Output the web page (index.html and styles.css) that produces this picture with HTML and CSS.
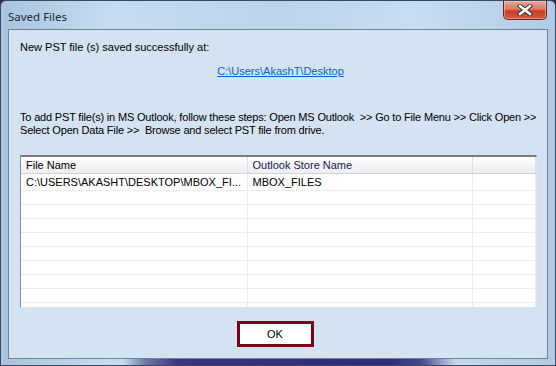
FILE: index.html
```html
<!DOCTYPE html>
<html lang="en">
<head>
    <meta charset="UTF-8">
    <title>Saved Files</title>
    <link rel="stylesheet" href="styles.css">
</head>
<body>

    <div class="window">

        <!-- Title bar -->
        <div class="titlebar">
            <span class="title">Saved Files</span>
            <button class="close" title="Close">
                <svg width="16" height="12" viewBox="0 0 16 12">
                    <path d="M3 2 L13 10 M13 2 L3 10" stroke="#3a3a3a" stroke-width="4.5" stroke-linecap="square"/>
                    <path d="M3 2 L13 10 M13 2 L3 10" stroke="#ffffff" stroke-width="2.4" stroke-linecap="square"/>
                </svg>
            </button>
        </div>

        <!-- Dialog content -->
        <div class="client">
            <p class="msg">New PST file (s) saved successfully at:</p>
            <div class="path-row"><a class="path" href="#">C:\Users\AkashT\Desktop</a></div>
            <p class="steps">To add PST file(s) in MS Outlook, follow these steps: Open MS Outlook &nbsp;&gt;&gt; Go to File Menu &gt;&gt; Click Open &gt;&gt;<br>Select Open Data File &gt;&gt; &nbsp;Browse and select PST file from drive.</p>

            <div class="grid">
                <table>
                    <colgroup>
                        <col class="c1">
                        <col class="c2">
                        <col>
                    </colgroup>
                    <thead>
                        <tr>
                            <th>File Name</th>
                            <th class="store">Outlook Store Name</th>
                            <th></th>
                        </tr>
                    </thead>
                    <tbody>
                        <tr class="first">
                            <td>C:\USERS\AKASHT\DESKTOP\MBOX_FI...</td>
                            <td>MBOX_FILES</td>
                            <td></td>
                        </tr>
                        <tr><td></td><td></td><td></td></tr>
                        <tr><td></td><td></td><td></td></tr>
                        <tr><td></td><td></td><td></td></tr>
                        <tr><td></td><td></td><td></td></tr>
                        <tr><td></td><td></td><td></td></tr>
                        <tr><td></td><td></td><td></td></tr>
                        <tr><td></td><td></td><td></td></tr>
                        <tr><td></td><td></td><td></td></tr>
                        <tr><td></td><td></td><td></td></tr>
                    </tbody>
                </table>
            </div>

            <div class="actions">
                <button class="ok">OK</button>
            </div>
        </div>

        <div class="bottom-edge"></div>
    </div>

</body>
</html>
```

FILE: styles.css
```css
body {
    margin: 0;
    padding: 0;
    background-color: #2b2b55;
}
.window {
    width: 556px;
    height: 366px;
    box-sizing: border-box;
    display: flex;
    flex-direction: column;
    background: linear-gradient(90deg, #a9c4df 0%, #c7dcf0 20%, #bcd3ea 50%, #c9ddf1 75%, #b2cbe4 100%);
    border: 1px solid #3b4a5c;
    border-radius: 6px 6px 0 0;
    overflow: hidden;
}
.titlebar {
    height: 28px;
    display: flex;
    align-items: flex-start;
    flex-shrink: 0;
}
.title {
    font-family: 'Noto Sans', sans-serif;
    font-size: 11.5px;
    color: #1e2a38;
    padding: 8px 0 0 7px;
}
.close {
    margin-left: auto;
    margin-right: 8px;
    width: 44px;
    height: 19px;
    border: 1px solid #5c2a22;
    border-top: none;
    border-radius: 0 0 5px 5px;
    background: linear-gradient(180deg, #e8a898 0%, #dc7a66 45%, #c83e27 55%, #d4583c 100%);
    box-shadow: inset 0 0 0 1px rgba(255, 220, 210, 0.45);
    padding: 0;
    display: flex;
    align-items: center;
    justify-content: center;
}
.client {
    flex: 1;
    margin: 0 7px;
    background-color: #d4e3f2;
    border: 1px solid #6f849a;
    padding: 0 0 0 11px;
    font-family: 'Liberation Sans', Arial, sans-serif;
    font-size: 11px;
    line-height: 13px;
    color: #000;
}
.msg {
    margin: 11px 0 0 0;
}
.path-row {
    margin-top: 11px;
    text-align: center;
    padding-right: 6px;
}
.path {
    color: #0b5fd0;
    text-decoration: underline;
}
.steps {
    margin: 33px 0 0 0;
    white-space: nowrap;
    letter-spacing: -0.18px;
}
.grid {
    margin-top: 18px;
    width: 517px;
    height: 153px;
    box-sizing: border-box;
    border: 1px solid #e2e2e2;
    border-top: 2px solid #7c7c7c;
    border-left: 1px solid #8a8a8a;
    background-color: #fff;
    overflow: hidden;
}
table {
    width: 100%;
    table-layout: fixed;
    border-collapse: collapse;
}
.c1 {
    width: 226px;
}
.c2 {
    width: 225px;
}
th {
    height: 16px;
    padding: 0 0 0 5px;
    text-align: left;
    font-weight: normal;
    background: linear-gradient(180deg, #ffffff 0%, #f4f5f7 50%, #eceef1 100%);
    border-right: 1px solid #dcdde0;
    border-bottom: 1px solid #d0d2d6;
    white-space: nowrap;
}
th.store {
    color: #14204a;
}
td {
    height: 13px;
    padding: 0 0 0 5px;
    border-right: 1px solid #ececec;
    border-bottom: 1px solid #ececec;
    white-space: nowrap;
    overflow: hidden;
}
tr.first td {
    height: 16px;
}
.actions {
    display: flex;
    justify-content: center;
    padding: 13px 17px 0 0;
}
.ok {
    width: 77px;
    height: 26px;
    border: 3px solid #7d0019;
    background-color: #fff;
    font-family: 'Liberation Sans', Arial, sans-serif;
    font-size: 11px;
    color: #000;
    padding: 0;
}
.bottom-edge {
    height: 6px;
    flex-shrink: 0;
    background: linear-gradient(90deg, transparent 0%, transparent 22%, #6f7aa8 26%, #3a3380 32%, #2e2a7a 70%, #4a4890 76%, transparent 82%);
}
```
